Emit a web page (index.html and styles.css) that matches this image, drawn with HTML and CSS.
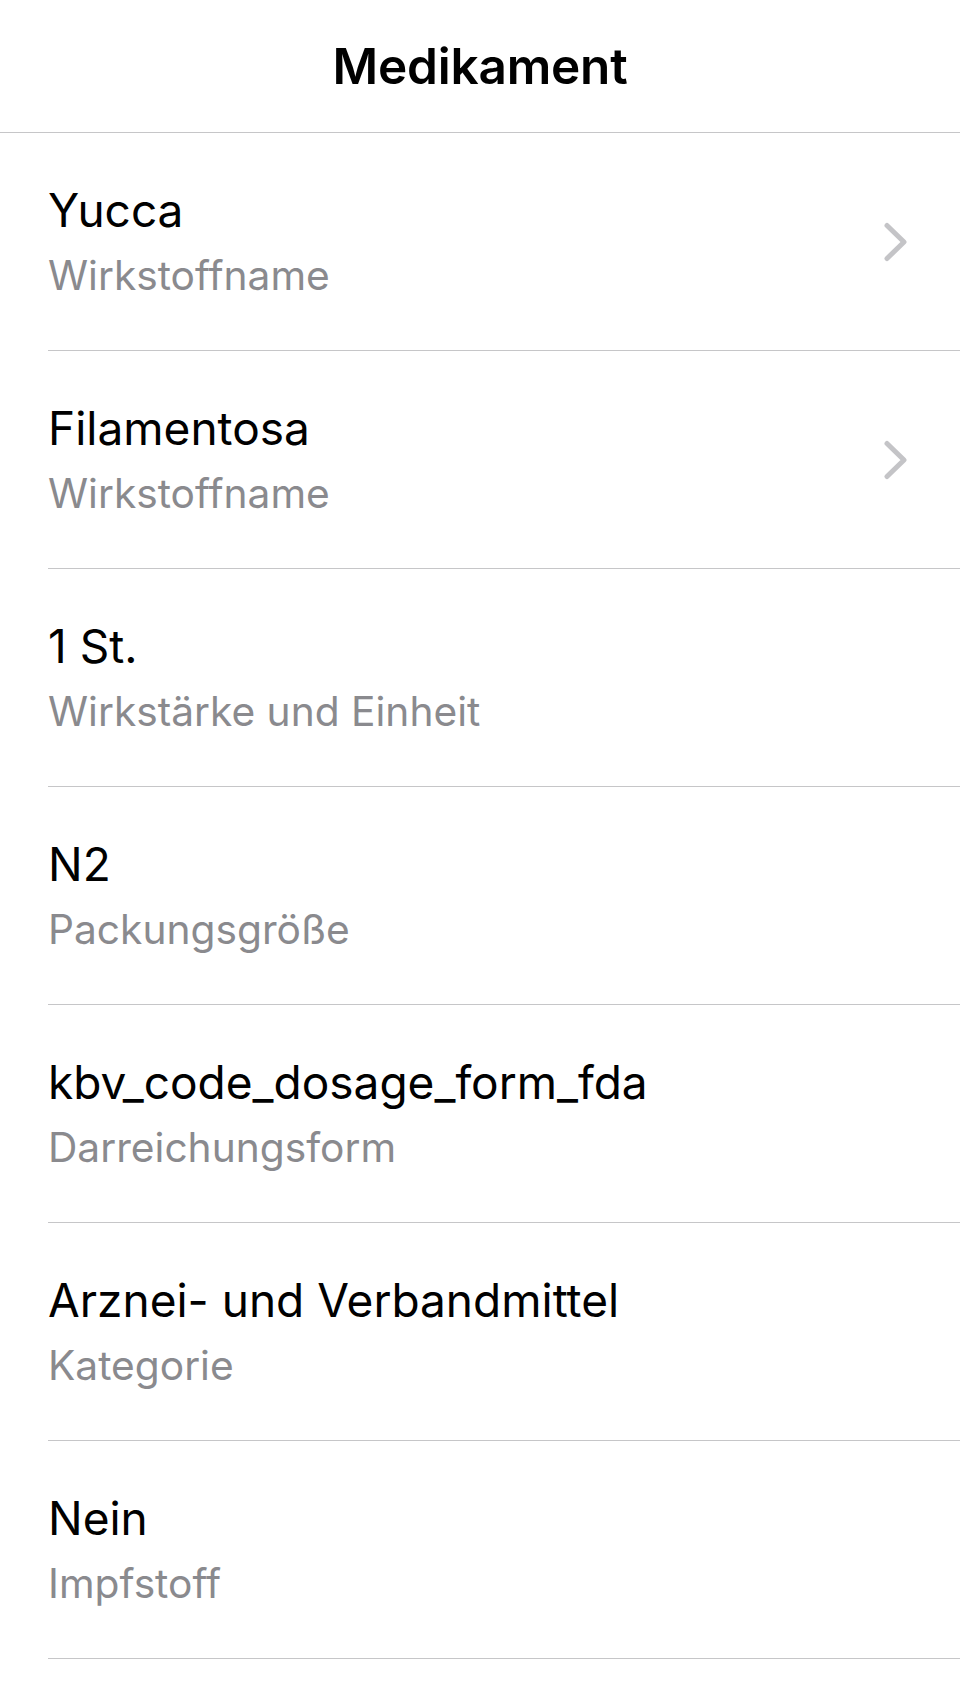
FILE: index.html
```html
<!DOCTYPE html>
<html lang="de">
<head>
<meta charset="utf-8">
<title>Medikament</title>
<link rel="stylesheet" href="styles.css">
</head>
<body>
<header class="nav">
  <h1 class="nav-title">Medikament</h1>
</header>
<ul class="list">
  <li class="row">
    <div class="row-inner">
      <div class="texts">
        <div class="value">Yucca</div>
        <div class="label">Wirkstoffname</div>
      </div>
      <svg class="chevron" viewBox="0 0 26 40" width="26" height="40" aria-hidden="true"><path d="M4 3.5 L21 20 L4 36.5" /></svg>
    </div>
  </li>
  <li class="row">
    <div class="row-inner">
      <div class="texts">
        <div class="value">Filamentosa</div>
        <div class="label">Wirkstoffname</div>
      </div>
      <svg class="chevron" viewBox="0 0 26 40" width="26" height="40" aria-hidden="true"><path d="M4 3.5 L21 20 L4 36.5" /></svg>
    </div>
  </li>
  <li class="row">
    <div class="row-inner">
      <div class="texts">
        <div class="value">1 St.</div>
        <div class="label">Wirkstärke und Einheit</div>
      </div>
    </div>
  </li>
  <li class="row">
    <div class="row-inner">
      <div class="texts">
        <div class="value">N2</div>
        <div class="label">Packungsgröße</div>
      </div>
    </div>
  </li>
  <li class="row">
    <div class="row-inner">
      <div class="texts">
        <div class="value">kbv_code_dosage_form_fda</div>
        <div class="label">Darreichungsform</div>
      </div>
    </div>
  </li>
  <li class="row">
    <div class="row-inner">
      <div class="texts">
        <div class="value">Arznei- und Verbandmittel</div>
        <div class="label">Kategorie</div>
      </div>
    </div>
  </li>
  <li class="row">
    <div class="row-inner">
      <div class="texts">
        <div class="value">Nein</div>
        <div class="label">Impfstoff</div>
      </div>
    </div>
  </li>
</ul>
</body>
</html>
```
FILE: styles.css
```css
html, body {
  margin: 0;
  padding: 0;
  background: #ffffff;
}

body {
  font-family: Inter, "Liberation Sans", Arial, sans-serif;
  color: #000000;
  width: 960px;
}

.nav {
  height: 132px;
  border-bottom: 1px solid #c6c6c8;
  display: flex;
  align-items: center;
  justify-content: center;
}

.nav-title {
  margin: 0;
  font-size: 49.5px;
  font-weight: 600;
  line-height: 132px;
  letter-spacing: -0.2px;
}

.list {
  list-style: none;
  margin: 0;
  padding: 0;
}

.row {
  padding-left: 48px;
}

.row-inner {
  display: flex;
  align-items: center;
  justify-content: space-between;
  height: 217px;
  border-bottom: 1px solid #c6c6c8;
  padding-right: 51px;
}

.texts {
  display: flex;
  flex-direction: column;
  gap: 13px;
}

.value {
  font-size: 46px;
  line-height: 56px;
  font-weight: 400;
  color: #000000;
}

.label {
  font-size: 40.7px;
  line-height: 50px;
  font-weight: 400;
  color: #8a8a8e;
}

.chevron {
  display: block;
  fill: none;
  stroke: #c4c4c7;
  stroke-width: 5;
  stroke-linecap: round;
  stroke-linejoin: round;
}
```
